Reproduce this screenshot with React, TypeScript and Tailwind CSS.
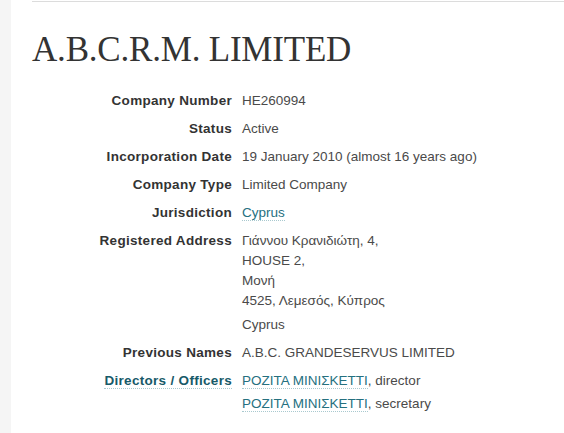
import React from "react";

const linkCls =
  "text-[#25707f] border-b border-dotted border-[#a9c9cf]";

function Row({
  label,
  children,
  labelLink = false,
}: {
  label: string;
  children: React.ReactNode;
  labelLink?: boolean;
}) {
  return (
    <>
      <dt className="text-right font-bold text-[#333] leading-5 mb-2 text-[13.5px] tracking-[0.3px]">
        {labelLink ? <span className="text-[#175a69] border-b border-dotted border-[#a9c9cf]">{label}</span> : label}
      </dt>
      <dd className="text-[#4a4a4a] leading-5 mb-2 text-[13.5px]">{children}</dd>
    </>
  );
}

export default function App() {
  return (
    <div
      className="flex min-h-[433px] w-[564px] bg-white overflow-hidden"
      style={{ fontFamily: '"Liberation Sans", Arial, sans-serif' }}
    >
      <div className="w-[11px] shrink-0 bg-[#f5f5f5]" />
      <div className="flex-1 pl-[21px] pt-px">
        <div className="border-t border-[#dcdcdc]">
          <h1
            className="mt-[28px] text-[35px] leading-10 text-[#333] tracking-[-0.2px]"
            style={{ fontFamily: '"Liberation Serif", "Times New Roman", serif' }}
          >
            A.B.C.R.M. LIMITED
          </h1>
          <dl className="mt-[21px] grid grid-cols-[200px_1fr] gap-x-[10px]">
            <Row label="Company Number">HE260994</Row>
            <Row label="Status">Active</Row>
            <Row label="Incorporation Date">19 January 2010 (almost 16 years ago)</Row>
            <Row label="Company Type">Limited Company</Row>
            <Row label="Jurisdiction">
              <span className={linkCls}>Cyprus</span>
            </Row>
            <Row label="Registered Address">
              <div>Γιάννου Κρανιδιώτη, 4,</div>
              <div>HOUSE 2,</div>
              <div>Μονή</div>
              <div>4525, Λεμεσός, Κύπρος</div>
              <div className="mt-1">Cyprus</div>
            </Row>
            <Row label="Previous Names">A.B.C. GRANDESERVUS LIMITED</Row>
            <Row label="Directors / Officers" labelLink>
              <div className="flex flex-col gap-[3px]">
                <div>
                  <span className={linkCls}>ΡΟΖΙΤΑ ΜΙΝΙΣΚΕΤΤΙ</span>, director
                </div>
                <div>
                  <span className={linkCls}>ΡΟΖΙΤΑ ΜΙΝΙΣΚΕΤΤΙ</span>, secretary
                </div>
              </div>
            </Row>
          </dl>
        </div>
      </div>
    </div>
  );
}
